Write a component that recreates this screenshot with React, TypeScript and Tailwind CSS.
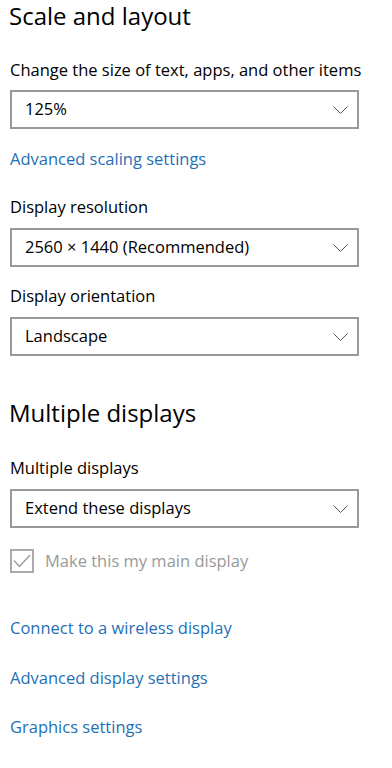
import React from "react";

const font = { fontFamily: '"Open Sans", "Noto Sans", sans-serif' };

function Chevron() {
	return (
		<svg width="15" height="8" viewBox="0 0 15 8" fill="none" className="shrink-0">
			<path d="M0.5 0.5 L7.5 7.5 L14.5 0.5" stroke="#555555" strokeWidth="1" />
		</svg>
	);
}

function Dropdown({ value, className = "" }: { value: string; className?: string }) {
	return (
		<div
			className={`flex h-[39px] w-[349px] items-center justify-between border-2 border-[#999999] bg-white pl-[13px] pr-[9px] text-[16.5px] text-black ${className}`}
		>
			<span>{value}</span>
			<Chevron />
		</div>
	);
}

function Heading({ children, className = "" }: { children: React.ReactNode; className?: string }) {
	return (
		<h2 className={`h-[32px] text-[24px] leading-[32px] font-normal text-black ${className}`}>
			{children}
		</h2>
	);
}

function Label({ children, className = "" }: { children: React.ReactNode; className?: string }) {
	return <div className={`h-[24px] text-[16.5px] leading-[24px] text-black ${className}`}>{children}</div>;
}

function Link({ children, className = "" }: { children: React.ReactNode; className?: string }) {
	return (
		<a href="#" className={`block h-[24px] w-fit text-[16.5px] leading-[24px] text-[#1f6fb5] ${className}`}>
			{children}
		</a>
	);
}

export default function App() {
	return (
		<div className="min-h-[768px] w-[392px] bg-white pl-[10px]" style={font}>
			<Heading className="-ml-[1px]">Scale and layout</Heading>
			<Label className="mt-[26px]">Change the size of text, apps, and other items</Label>
			<Dropdown value="125%" className="mt-[8px]" />
			<Link className="mt-[18px]">Advanced scaling settings</Link>

			<Label className="mt-[24px]">Display resolution</Label>
			<Dropdown value="2560 × 1440 (Recommended)" className="mt-[9px]" />
			<Label className="mt-[17px]">Display orientation</Label>
			<Dropdown value="Landscape" className="mt-[9px]" />

			<Heading className="-ml-[1px] mt-[41px]">Multiple displays</Heading>
			<Label className="mt-[27px]">Multiple displays</Label>
			<Dropdown value="Extend these displays" className="mt-[9px]" />

			<label className="mt-[21px] flex h-[24px] items-center gap-[11px] text-[16.5px] text-[#999999]">
				<span className="flex h-[24px] w-[24px] items-center justify-center border-2 border-[#aaaaaa]">
					<svg width="18" height="14" viewBox="0 0 18 14" fill="none">
						<path d="M1 6.5 L6.5 12.5 L17 1" stroke="#9a9a9a" strokeWidth="1.3" />
					</svg>
				</span>
				<span>Make this my main display</span>
			</label>

			<Link className="mt-[43px]">Connect to a wireless display</Link>
			<Link className="mt-[26px]">Advanced display settings</Link>
			<Link className="mt-[25px]">Graphics settings</Link>
		</div>
	);
}
